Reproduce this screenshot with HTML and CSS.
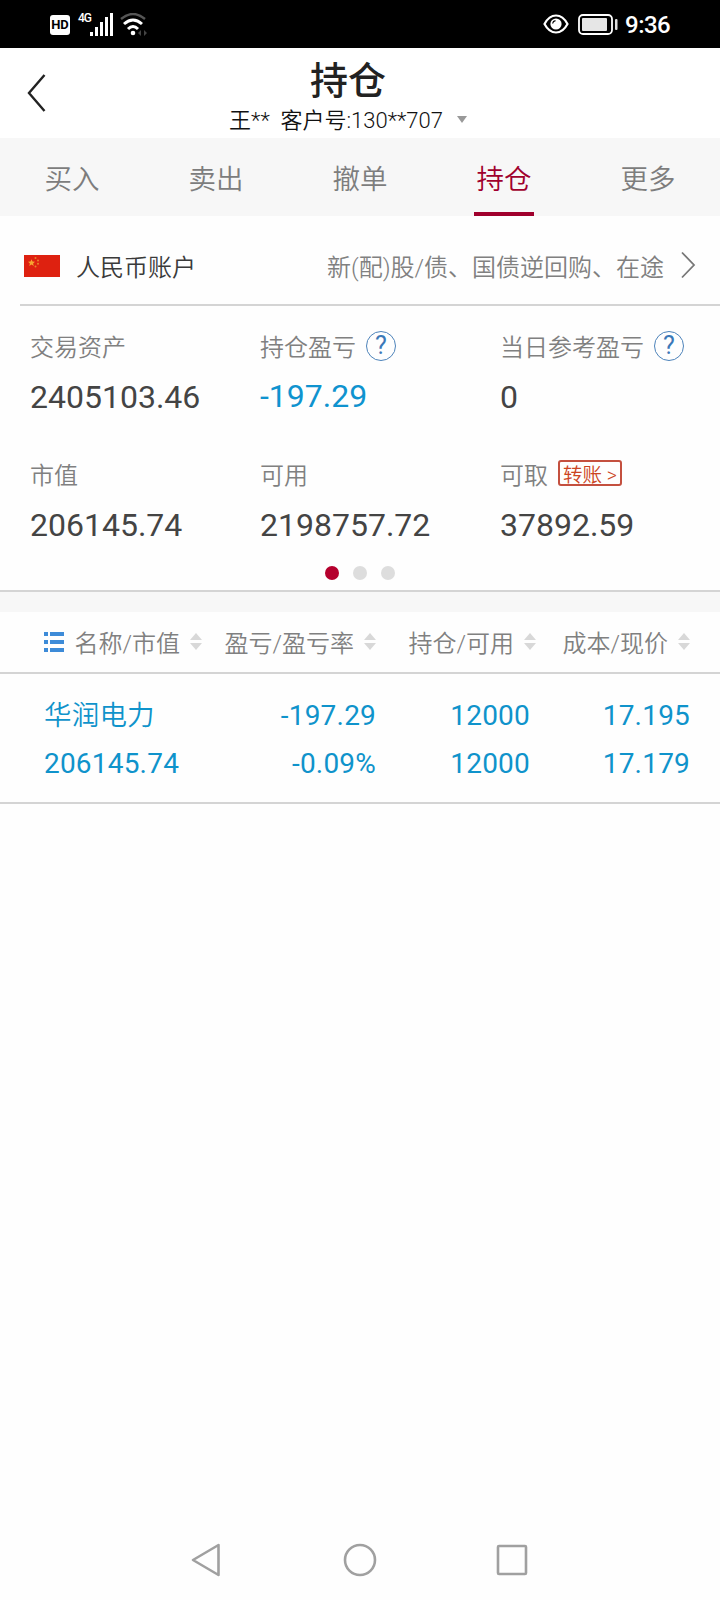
FILE: index.html
```
<!DOCTYPE html>
<html lang="zh-CN">
<head>
    <meta charset="UTF-8">
    <meta name="viewport" content="width=device-width, initial-scale=1.0">
    <title>持仓</title>
    <link rel="stylesheet" href="styles.css">
</head>
<body>

    <div class="status-bar">
        <span class="hd">HD</span>
        <span class="net">4G</span>
        <svg class="signal" width="24" height="23" viewBox="0 0 24 23" fill="#fff">
            <rect x="0" y="19" width="3" height="4"/>
            <rect x="5" y="14" width="3" height="9"/>
            <rect x="10" y="9" width="3" height="14"/>
            <rect x="15" y="4" width="3" height="19"/>
            <rect x="20" y="0" width="3" height="23"/>
        </svg>
        <svg class="wifi" width="28" height="23" viewBox="0 0 28 23" fill="none">
            <path d="M1 6Q13 -4 25 6" stroke="#555" stroke-width="2.4"/>
            <path d="M4 11Q13 3 22 11" stroke="#fff" stroke-width="3"/>
            <path d="M8 16Q13 11 18 16" stroke="#fff" stroke-width="3"/>
            <circle cx="13" cy="20" r="2.3" fill="#fff"/>
            <path d="M21 17v6l-3-3zM24 17v6l3-3z" fill="#444"/>
        </svg>
        <svg class="eye" width="26" height="20" viewBox="0 0 26 20" fill="none">
            <path d="M1.5 10Q6 1.5 13 1.5T24.5 10Q20 18.5 13 18.5T1.5 10Z" stroke="#fff" stroke-width="2.2"/>
            <circle cx="13" cy="10" r="5.6" fill="#fff"/>
            <path d="M9.6 9.5Q10 7 12.5 6.6" stroke="#000" stroke-width="1.2"/>
        </svg>
        <svg class="battery" width="40" height="21" viewBox="0 0 40 21" fill="none">
            <rect x="1" y="1" width="33" height="19" rx="4" stroke="#fff" stroke-width="1.8"/>
            <rect x="4" y="4" width="25" height="13" rx="1" fill="#e6e6e6"/>
            <rect x="37" y="5" width="2.5" height="11" rx="1" fill="#ddd"/>
        </svg>
        <span class="clock">9:36</span>
    </div>

    <div class="header">
        <svg class="back" width="20" height="40" viewBox="0 0 20 40" fill="none" stroke="#222" stroke-width="2.4">
            <path d="M17.5 2L2 20L17.5 38"/>
        </svg>
        <div class="title-box">
            <h1>持仓</h1>
            <div class="customer">王**&nbsp; 客户号:130**707<span class="caret"></span></div>
        </div>
    </div>

    <div class="tabs">
        <a class="tab">买入</a>
        <a class="tab">卖出</a>
        <a class="tab">撤单</a>
        <a class="tab active">持仓</a>
        <a class="tab">更多</a>
    </div>

    <div class="account">
        <svg class="flag" width="36" height="22" viewBox="0 0 36 22">
            <rect width="36" height="22" fill="#de2110"/>
            <path d="M7.5 4.3l1 2.3 2.5.2-1.9 1.6.6 2.5-2.2-1.3-2.2 1.3.6-2.5L4 6.8l2.5-.2z" fill="#f7a531"/>
            <g fill="#e8832a">
                <circle cx="11.5" cy="3" r="1"/>
                <circle cx="14" cy="5.5" r="1"/>
                <circle cx="14" cy="8.8" r="1"/>
                <circle cx="11.5" cy="11.5" r="1"/>
            </g>
        </svg>
        <span class="account-name">人民币账户</span>
        <span class="account-more">新(配)股/债、国债逆回购、在途</span>
        <svg class="arrow" width="16" height="28" viewBox="0 0 16 28" fill="none" stroke="#777" stroke-width="1.8">
            <path d="M2 1.5L14 14L2 26.5"/>
        </svg>
    </div>

    <div class="summary">
        <div class="item">
            <div class="label">交易资产</div>
            <div class="value">2405103.46</div>
        </div>
        <div class="item">
            <div class="label">持仓盈亏<span class="help">?</span></div>
            <div class="value blue">-197.29</div>
        </div>
        <div class="item">
            <div class="label">当日参考盈亏<span class="help">?</span></div>
            <div class="value">0</div>
        </div>
        <div class="item">
            <div class="label">市值</div>
            <div class="value">206145.74</div>
        </div>
        <div class="item">
            <div class="label">可用</div>
            <div class="value">2198757.72</div>
        </div>
        <div class="item">
            <div class="label">可取<span class="transfer">转账 &gt;</span></div>
            <div class="value">37892.59</div>
        </div>
    </div>
    <div class="dots">
        <span class="dot on"></span>
        <span class="dot"></span>
        <span class="dot"></span>
    </div>

    <div class="gap"></div>

    <div class="table-head">
        <div class="th">
            <svg class="list" width="20" height="20" viewBox="0 0 20 20" fill="#3d8bd8">
                <path d="M0 0h4v4H0zM6 0h14v4H6zM0 8h4v4H0zM6 8h14v4H6zM0 16h4v4H0zM6 16h14v4H6z"/>
            </svg>
            名称/市值<span class="sort"></span>
        </div>
        <div class="th">盈亏/盈亏率<span class="sort"></span></div>
        <div class="th">持仓/可用<span class="sort"></span></div>
        <div class="th">成本/现价<span class="sort"></span></div>
    </div>

    <div class="stock">
        <div class="td"><span class="stock-name">华润电力</span><span>206145.74</span></div>
        <div class="td"><span>-197.29</span><span>-0.09%</span></div>
        <div class="td"><span>12000</span><span>12000</span></div>
        <div class="td"><span>17.195</span><span>17.179</span></div>
    </div>

    <div class="nav-bar">
        <svg width="34" height="34" viewBox="0 0 34 34"><path d="M27.5 2v30L2 17z"/></svg>
        <svg width="34" height="34" viewBox="0 0 34 34"><circle cx="17" cy="17" r="15"/></svg>
        <svg width="34" height="34" viewBox="0 0 34 34"><rect x="3" y="3" width="28" height="28" rx="1"/></svg>
    </div>

</body>
</html>
```
FILE: styles.css
```
* {
    box-sizing: border-box;
}
body {
    margin: 0;
    width: 720px;
    height: 1600px;
    display: flex;
    flex-direction: column;
    background: #fefefe;
    color: #444;
    font-family: Roboto, "Noto Sans CJK SC", sans-serif;
    font-weight: 350;
}
.status-bar {
    height: 48px;
    padding: 0 49px 0 50px;
    display: flex;
    align-items: center;
    background: #000;
    color: #fff;
}
.hd {
    width: 20px;
    height: 20px;
    margin-top: 2px;
    border-radius: 3px;
    background: #fff;
    color: #000;
    font-size: 13px;
    font-weight: 700;
    line-height: 20px;
    text-align: center;
}
.net {
    align-self: flex-start;
    width: 12px;
    margin: 10px 0 0 8px;
    font-size: 12px;
    font-weight: 500;
    line-height: 16px;
    letter-spacing: -1px;
}
.signal {
    width: 24px;
}
.wifi {
    margin-left: 6px;
}
.eye {
    margin-left: auto;
}
.battery {
    margin-left: 9px;
}
.clock {
    margin: 2px 0 0 7px;
    font-size: 24px;
    font-weight: 500;
    width: 46px;
    letter-spacing: -0.5px;
}
.header {
    height: 90px;
    padding-left: 27px;
    display: flex;
    background: #fff;
}
.back {
    margin-top: 25px;
}
.title-box {
    width: 602px;
    text-align: center;
}
h1 {
    margin: 11px 0 0;
    font-size: 38px;
    font-weight: 500;
    line-height: 44px;
    color: #222;
}
.customer {
    display: flex;
    align-items: center;
    justify-content: center;
    margin-top: 4px;
    font-size: 22px;
    line-height: 28px;
    color: #111;
}
.caret {
    margin: -4px 0 0 14px;
    border: 5px solid transparent;
    border-top: 7px solid #999;
    border-bottom: 0;
}
.tabs {
    height: 78px;
    display: flex;
    background: #f7f7f7;
}
.tab {
    flex: 1;
    display: flex;
    justify-content: center;
    margin: 0 42px;
    padding-top: 22px;
    font-size: 27.5px;
    line-height: 40px;
    white-space: nowrap;
    color: #7d7d7d;
}
.tab.active {
    color: #a0002d;
    border-bottom: 4px solid #a0002d;
}
.account {
    height: 90px;
    margin-left: 20px;
    padding: 0 24px 0 4px;
    display: flex;
    align-items: center;
    border-bottom: 2px solid #d4d4d4;
    font-size: 24px;
}
.flag {
    margin-top: 11px;
}
.account-name {
    margin: 10px 0 0 16px;
    color: #3a3a3a;
}
.account-more {
    margin: 10px 16px 0 auto;
    color: #808080;
}
.arrow {
    margin-top: 9px;
}
.summary {
    height: 252px;
    padding: 22px 0 0 30px;
    display: grid;
    grid-template-columns: 230px 240px 1fr;
    grid-auto-rows: 128px;
}
.label {
    display: flex;
    align-items: center;
    height: 34px;
    font-size: 24px;
    color: #808080;
}
.value {
    margin-top: 15px;
    font-size: 32px;
    font-weight: 400;
    line-height: 40px;
}
.value.blue {
    margin-top: 14px;
    color: #0f93cf;
}
.help {
    width: 30px;
    height: 30px;
    margin: 1px 0 0 10px;
    border: 1.5px solid #4d83ba;
    border-radius: 50%;
    color: #3b78b8;
    font-size: 25px;
    font-weight: 400;
    line-height: 28px;
    text-align: center;
}
.transfer {
    width: 64px;
    height: 26px;
    margin: 0 0 0 10px;
    border: 2px solid #c4503f;
    border-radius: 3px;
    color: #cc4422;
    font-size: 19.5px;
    line-height: 28px;
    text-align: center;
    white-space: nowrap;
}
.dots {
    height: 34px;
    padding-top: 8px;
    display: flex;
    justify-content: center;
    gap: 14px;
    border-bottom: 2px solid #d4d4d4;
}
.dot {
    width: 14px;
    height: 14px;
    border-radius: 50%;
    background: #ddd;
}
.dot.on {
    background: #b5002d;
}
.gap {
    height: 20px;
    background: #f7f7f7;
}
.table-head {
    height: 62px;
    padding-left: 44px;
    display: grid;
    grid-template-columns: 158px 174px 160px 154px;
    border-bottom: 2px solid #d4d4d4;
    font-size: 24px;
    color: #808080;
}
.th {
    display: flex;
    align-items: center;
    justify-content: flex-end;
    padding-bottom: 2px;
    white-space: nowrap;
}
.list {
    margin: 1px 10px 0 0;
}
.sort {
    margin: 0 0 0 10px;
}
.sort::before,
.sort::after {
    content: "";
    display: block;
    border: 6px solid transparent;
}
.sort::before {
    border-top: 0;
    border-bottom: 7px solid #d8d8d8;
}
.sort::after {
    margin-top: 3px;
    border-bottom: 0;
    border-top: 7px solid #d8d8d8;
}
.stock {
    height: 130px;
    padding: 18px 0 0 44px;
    display: grid;
    grid-template-columns: 158px 174px 154px 160px;
    border-bottom: 2px solid #d4d4d4;
    font-size: 28px;
    font-weight: 400;
    line-height: 48px;
    letter-spacing: 0.2px;
    color: #0f93cb;
}
.td {
    display: flex;
    flex-direction: column;
    text-align: right;
}
.td:first-child {
    text-align: left;
}
.stock-name {
    font-size: 27.5px;
    font-weight: 350;
}
.nav-bar {
    margin-top: auto;
    height: 80px;
    padding: 0 191px;
    display: flex;
    align-items: center;
    justify-content: space-between;
}
.nav-bar svg {
    fill: none;
    stroke: #a0a0a0;
    stroke-width: 2.6;
    stroke-linejoin: round;
}
```
